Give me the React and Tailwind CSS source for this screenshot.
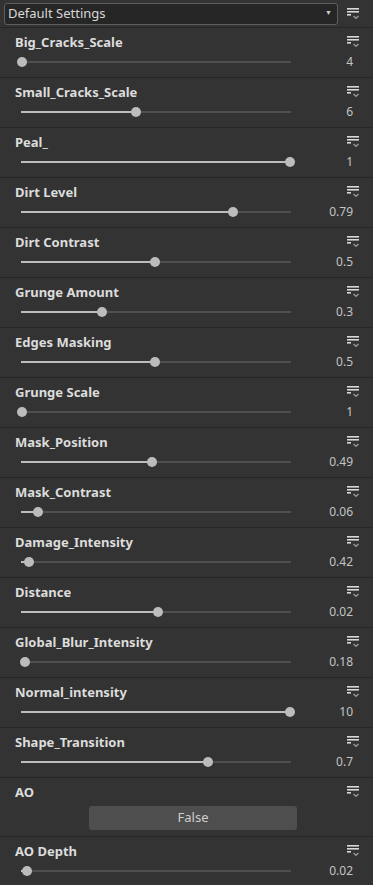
import React from "react";

const rows = [
  { label: "Big_Cracks_Scale", value: "4", pos: 22 },
  { label: "Small_Cracks_Scale", value: "6", pos: 136 },
  { label: "Peal_", value: "1", pos: 290 },
  { label: "Dirt Level", value: "0.79", pos: 233 },
  { label: "Dirt Contrast", value: "0.5", pos: 155 },
  { label: "Grunge Amount", value: "0.3", pos: 102 },
  { label: "Edges Masking", value: "0.5", pos: 155 },
  { label: "Grunge Scale", value: "1", pos: 22 },
  { label: "Mask_Position", value: "0.49", pos: 152 },
  { label: "Mask_Contrast", value: "0.06", pos: 38 },
  { label: "Damage_Intensity", value: "0.42", pos: 29 },
  { label: "Distance", value: "0.02", pos: 158 },
  { label: "Global_Blur_Intensity", value: "0.18", pos: 25 },
  { label: "Normal_intensity", value: "10", pos: 290 },
  { label: "Shape_Transition", value: "0.7", pos: 208 },
];

/* Menu icon: three bars + small chevron */
function MenuIcon() {
  return (
    <svg width="14" height="12" viewBox="0 0 14 12" className="block">
      <rect x="0" y="0" width="12" height="1.6" fill="#d8d8d8" />
      <rect x="0" y="3" width="12" height="1.6" fill="#d8d8d8" />
      <rect x="0" y="6" width="4" height="1.6" fill="#d8d8d8" />
      <path d="M6.5 8 L9 10.3 L11.5 8" stroke="#9a9a9a" strokeWidth="1.3" fill="none" />
    </svg>
  );
}

function Slider({ pos, value }) {
  const pct = ((pos - 21) / 270) * 100;
  return (
    <div className="flex items-center h-[14px]">
      <div className="relative ml-[21px] w-[270px] h-[2px] bg-[#4f4f4f]">
        <div className="absolute left-0 top-0 h-[2px] bg-[#bdbdbd]" style={{ width: pct + "%" }} />
        <div
          className="absolute top-1/2 w-[10px] h-[10px] -translate-x-1/2 -translate-y-1/2 rounded-full bg-[#bcbcbc]"
          style={{ left: pct + "%" }}
        />
      </div>
      <div className="w-[62px] text-right text-[12px] text-[#c4c4c4] leading-none">{value}</div>
    </div>
  );
}

function Row({ label, children, tall }) {
  return (
    <div className={`border-b border-[#262626] pt-[5px] ${tall ? "h-[59px]" : "h-[50px]"}`}>
      <div className="flex items-center justify-between h-[20px] pl-[15px] pr-[12px]">
        <span className="text-[13px] font-bold text-[#dcdcdc]">{label}</span>
        <div className="-mt-[3px]">
          <MenuIcon />
        </div>
      </div>
      <div className="pt-[2px]">{children}</div>
    </div>
  );
}

export default function App() {
  return (
    <div className="w-[373px] h-[885px] overflow-hidden bg-[#333333]" style={{ fontFamily: '"Noto Sans", "Open Sans", sans-serif' }}>
      {/* Preset dropdown */}
      <div className="flex items-center h-[28px] pl-[4px] pr-[12px] border-b border-[#262626]">
        <div className="flex items-center justify-between w-[334px] h-[22px] rounded-[3px] border border-[#5e5e5e] bg-[#262626] pl-[3px] pr-[5px]">
          <span className="text-[13px] text-[#d8d8d8] leading-none">Default Settings</span>
          <span className="text-[7px] text-[#d0d0d0]">▼</span>
        </div>
        <div className="ml-auto">
          <MenuIcon />
        </div>
      </div>

      {rows.map((r) => (
        <Row key={r.label} label={r.label}>
          <Slider pos={r.pos} value={r.value} />
        </Row>
      ))}

      <Row label="AO" tall>
        <div className="flex pt-[1px]">
          <button className="ml-[89px] w-[208px] h-[24px] rounded-[3px] bg-[#4e4e4e] text-[13px] text-[#cfcfcf]">
            False
          </button>
        </div>
      </Row>

      <Row label="AO Depth">
        <Slider pos={27} value="0.02" />
      </Row>
    </div>
  );
}
